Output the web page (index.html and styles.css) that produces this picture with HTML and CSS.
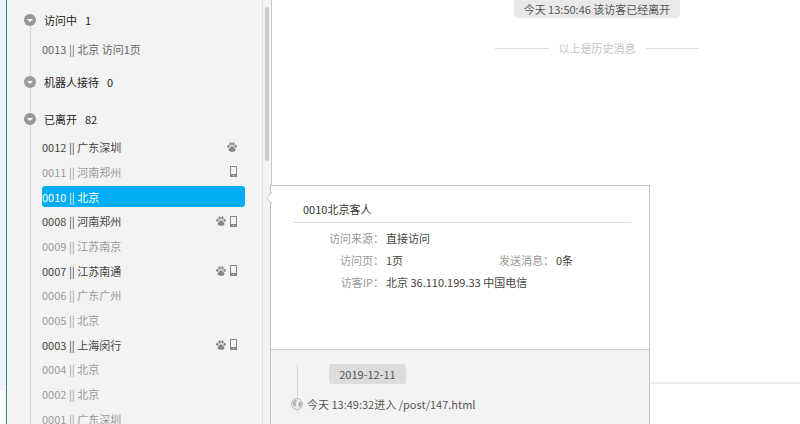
FILE: index.html
```
<!DOCTYPE html>
<html lang="zh-CN">
<head>
    <meta charset="UTF-8">
    <meta name="viewport" content="width=device-width, initial-scale=1.0">
    <title>在线客服</title>
    <link rel="stylesheet" href="styles.css">
</head>
<body>

    <!-- shared icons -->
    <svg class="sprite" aria-hidden="true">
        <symbol id="paw" viewBox="0 0 20 20">
            <ellipse cx="2.8" cy="8.6" rx="2.4" ry="3"/>
            <ellipse cx="7.2" cy="3.8" rx="2.4" ry="3.4"/>
            <ellipse cx="12.8" cy="3.8" rx="2.4" ry="3.4"/>
            <ellipse cx="17.2" cy="8.6" rx="2.4" ry="3"/>
            <path d="M10 8.400C7.400 8.400 6.600 10.900 5 12.500C3.400 14 2.800 15.200 3.300 17.100C3.900 19.200 6.100 19.700 10 19.300C13.900 19.700 16.100 19.200 16.700 17.100C17.200 15.200 16.600 14 15 12.500C13.400 10.900 12.600 8.400 10 8.400z"/>
        </symbol>
        <symbol id="phone" viewBox="0 0 7 11">
            <path fill-rule="evenodd" d="M0 0h7v11H0zM1 1v7h5V1zM3 9v1h1V9z"/>
        </symbol>
    </svg>

    <div class="rail"></div>

    <aside class="sidebar">
        <nav class="visitors">
            <section class="group">
                <button class="group-head"><span class="toggle"></span>访问中<span>1</span></button>
                <ul>
                    <li><a class="visitor viewing" href="#">0013 || 北京 访问1页</a></li>
                </ul>
            </section>
            <section class="group">
                <button class="group-head"><span class="toggle"></span>机器人接待<span>0</span></button>
                <ul></ul>
            </section>
            <section class="group">
                <button class="group-head"><span class="toggle"></span>已离开<span>82</span></button>
                <ul class="left-list">
                    <li><a class="visitor talked" href="#">0012 || 广东深圳<span class="icons"><svg class="paw"><use href="#paw"/></svg></span></a></li>
                    <li><a class="visitor" href="#">0011 || 河南郑州<span class="icons"><svg class="phone"><use href="#phone"/></svg></span></a></li>
                    <li><a class="visitor selected" href="#">0010 || 北京</a></li>
                    <li><a class="visitor talked" href="#">0008 || 河南郑州<span class="icons"><svg class="paw"><use href="#paw"/></svg><svg class="phone"><use href="#phone"/></svg></span></a></li>
                    <li><a class="visitor" href="#">0009 || 江苏南京</a></li>
                    <li><a class="visitor talked" href="#">0007 || 江苏南通<span class="icons"><svg class="paw"><use href="#paw"/></svg><svg class="phone"><use href="#phone"/></svg></span></a></li>
                    <li><a class="visitor" href="#">0006 || 广东广州</a></li>
                    <li><a class="visitor" href="#">0005 || 北京</a></li>
                    <li><a class="visitor talked" href="#">0003 || 上海闵行<span class="icons"><svg class="paw"><use href="#paw"/></svg><svg class="phone"><use href="#phone"/></svg></span></a></li>
                    <li><a class="visitor" href="#">0004 || 北京</a></li>
                    <li><a class="visitor" href="#">0002 || 北京</a></li>
                    <li><a class="visitor" href="#">0001 || 广东深圳</a></li>
                </ul>
            </section>
        </nav>
        <div class="scrollbar"><div class="thumb"></div></div>
    </aside>

    <main class="chat">
        <div class="messages">
            <p class="notice">今天 13:50:46 该访客已经离开</p>
            <p class="history">以上是历史消息</p>
        </div>
        <div class="composer"></div>
    </main>

    <div class="popover">
        <svg class="arrow" viewBox="0 0 6 12"><path d="M6 0L1 6l5 6" fill="#fff" stroke="#c4c4c4"/></svg>
        <section class="info">
            <h2>0010北京客人</h2>
            <dl>
                <dt>访问来源：</dt><dd class="wide">直接访问</dd>
                <dt>访问页：</dt><dd>1页</dd>
                <dt>发送消息：</dt><dd>0条</dd>
                <dt>访客IP：</dt><dd class="wide">北京 36.110.199.33 中国电信</dd>
            </dl>
        </section>
        <section class="track">
            <time class="date">2019-12-11</time>
            <div class="visit">
                <svg class="globe" viewBox="0 0 12 12">
                    <circle cx="6" cy="6" r="5.500" fill="#eee" stroke="#bbb"/>
                    <path d="M2 3l3-1.500 1 1.500-1.500 2 1 1.500-1.500 2.500-2.500-2.500zM7 5l2.500-1.500 1.500 2-1 3-2 1.500-.5-2.500z" fill="#b5b5b5"/>
                </svg>
                今天 13:49:32进入 /post/147.html
            </div>
        </section>
    </div>

</body>
</html>
```
FILE: styles.css
```
* {
    box-sizing: border-box;
}

body {
    display: flex;
    position: relative;
    height: 100vh;
    margin: 0;
    overflow: hidden;
    background-color: #fff;
    color: #555;
    font-family: "Noto Sans CJK SC", sans-serif;
    font-size: 11px;
    line-height: 20px;
}

ul, p, h2, dl, dd {
    margin: 0;
    padding: 0;
    list-style: none;
}

svg {
    display: block;
    flex: none;
}

.sprite {
    position: absolute;
    width: 0;
    height: 0;
}

.rail {
    width: 6px;
    margin-bottom: 34px;
    background-color: #edf3f9;
}

/* visitor list */
.sidebar {
    display: flex;
    flex: none;
    width: 266px;
    border-left: 1px solid #2f8496;
    border-right: 1px solid #c8c8c8;
    background-color: #f4f3f4;
}

.visitors {
    position: relative;
    flex: 1;
    padding: 10px 17px;
    border-right: 1px solid #e4e3e4;
}

.visitors::before {
    content: "";
    position: absolute;
    top: 19px;
    bottom: 0;
    left: 23px;
    width: 1px;
    background-color: #d6d6d6;
}

.group {
    position: relative;
    margin-bottom: 11px;
}

.group-head {
    display: flex;
    align-items: center;
    gap: 8px;
    height: 20px;
    padding: 0;
    border: none;
    background: none;
    color: #222;
    font: inherit;
    cursor: pointer;
}

.toggle {
    width: 12px;
    height: 12px;
    border-radius: 50%;
    background-color: #999;
}

.toggle::before {
    content: "";
    display: block;
    margin: 5px 3px;
    border: 3px solid transparent;
    border-top: 3px solid #fff;
    border-bottom: none;
}

.group ul {
    display: grid;
    grid-auto-rows: 25px;
    margin-top: 6px;
    padding-left: 18px;
}

.group .left-list {
    grid-auto-rows: 1fr;
    min-height: 296px;
}

.group li {
    display: flex;
    align-items: center;
}

.visitor {
    display: flex;
    flex: 1;
    align-items: center;
    height: 21px;
    padding-right: 8px;
    border-radius: 3px;
    color: #999;
    text-decoration: none;
}

.viewing {
    color: #666;
}

.talked {
    color: #444;
}

.selected {
    background-color: #00adf2;
    color: #fff;
}

.icons {
    display: flex;
    align-items: center;
    gap: 4px;
    margin-left: auto;
    fill: #858585;
}

.paw {
    width: 10px;
    height: 10px;
}

.phone {
    width: 7px;
    height: 11px;
}

.scrollbar {
    width: 8px;
    padding: 7px 2px;
}

.thumb {
    height: 154px;
    border-radius: 2px;
    background-color: #cacaca;
}

/* conversation */
.chat {
    display: flex;
    flex: 1;
    flex-direction: column;
}

.messages {
    flex: 1;
    padding-left: 223px;
    border-bottom: 2px solid #eee;
}

.notice, .history {
    display: flex;
    align-items: center;
    justify-content: center;
    width: 204px;
}

.notice {
    width: 166px;
    height: 18px;
    margin: 0 19px 20px;
    border-radius: 0 0 4px 4px;
    background-color: #e9e9e9;
}

.history {
    gap: 10px;
    color: #c4c4c4;
}

.history::before, .history::after {
    content: "";
    flex: 1;
    height: 1px;
    background-color: #ddd;
}

.composer {
    height: 40px;
}

/* visitor card */
.popover {
    display: flex;
    flex-direction: column;
    position: absolute;
    top: 185px;
    bottom: 0;
    left: 270px;
    width: 380px;
    border: 1px solid #c4c4c4;
    border-bottom: none;
    background-color: #fff;
}

.arrow {
    position: absolute;
    top: 6px;
    left: -5px;
    width: 6px;
    height: 12px;
}

.info {
    flex: none;
    height: 164px;
    padding: 13px 18px 0 22px;
    border-bottom: 1px solid #c8cccc;
}

.info h2 {
    padding: 0 10px 3px;
    border-bottom: 1px solid #ddd;
    color: #333;
    font-size: 11px;
    font-weight: normal;
}

.info dl {
    display: grid;
    grid-template-columns: 91px 75px 91px 1fr;
    grid-auto-rows: 22px;
    column-gap: 2px;
    margin-top: 5px;
}

.info dt {
    color: #999;
    text-align: right;
}

.info dd {
    color: #444;
}

.info .wide {
    grid-column: span 3;
}

.track {
    position: relative;
    flex: 1;
    padding: 14px 20px 0;
    background-color: #f4f3f4;
}

.track::before {
    content: "";
    position: absolute;
    top: 15px;
    left: 26px;
    width: 1px;
    height: 48px;
    background-color: #d4d4d4;
}

.date {
    display: block;
    width: 77px;
    margin-left: 38px;
    border-radius: 3px;
    background-color: #dcdcdc;
    text-align: center;
}

.visit {
    display: flex;
    position: relative;
    align-items: center;
    gap: 4px;
    margin-top: 10px;
}

.globe {
    width: 12px;
    height: 12px;
}
```
